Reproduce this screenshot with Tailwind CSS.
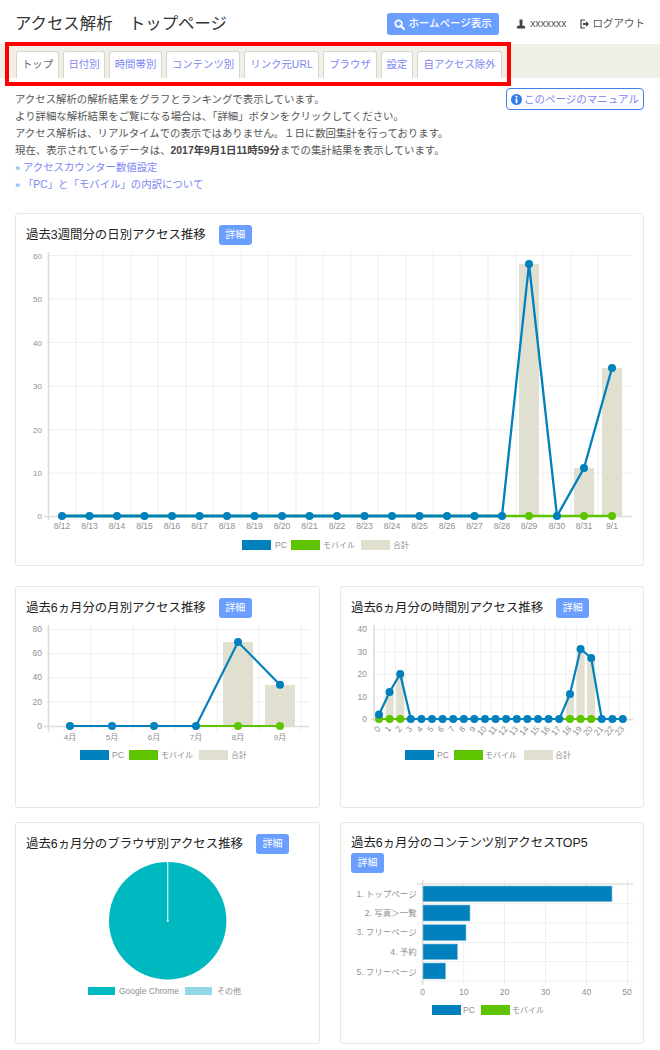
<!DOCTYPE html>
<html lang="ja">
<head>
<meta charset="utf-8">
<script src="https://cdn.jsdelivr.net/npm/@tailwindcss/browser@4"></script>
</head>
<body class="bg-white font-['Liberation_Sans','Noto_Sans_CJK_JP',sans-serif] text-[#555]">
<div class="relative w-[660px] h-[1050px] overflow-hidden">

<header class="flex items-center h-[44px] pt-[4px] pl-[15px] pr-[15px]">
  <h1 class="text-[16.4px] text-[#333] font-normal whitespace-pre mb-[2px]">アクセス解析　トップページ</h1>
  <a class="ml-auto flex items-center gap-[3px] w-[112px] justify-center h-[22px] rounded-[3px] bg-[#6a9eff] text-white text-[10.5px] font-medium">
    <svg class="w-[11px] h-[11px]" viewBox="0 0 12 12"><circle cx="5" cy="5" r="3.6" fill="none" stroke="white" stroke-width="1.9"/><path d="M7.6 7.6 11 11" stroke="white" stroke-width="2.2" stroke-linecap="round"/></svg>
    ホームページ表示
  </a>
  <span class="ml-[17px] flex items-center gap-[4px] text-[10.4px]">
    <svg class="w-[10px] h-[10px]" viewBox="0 0 9 10"><path d="M3 0.5h3v4l-0.4 1.4 3 1.6v2H0.4v-2l3-1.6L3 4.500z" fill="#444"/></svg>
    xxxxxxx
  </span>
  <span class="ml-[13px] flex items-center gap-[4px] text-[10.5px]">
    <svg class="w-[9px] h-[10px]" viewBox="0 0 9 10"><path d="M5 1H1v8h4" fill="none" stroke="#444" stroke-width="1.2"/><path d="M3 4h3V2l3 3-3 3V6H3z" fill="#444"/></svg>
    ログアウト
  </span>
</header>

<nav class="h-[34px] bg-[#f0efe8] flex items-end gap-[4px] pl-[16px] text-[10.4px] text-[#7d86f2]">
  <a class="w-[43px] h-[27px] flex items-center justify-center bg-white border border-[#d8d8c8] border-b-0 rounded-t-[3px] text-[#666]">トップ</a>
  <a class="w-[42px] h-[27px] flex items-center justify-center bg-white border border-[#d8d8c8] border-b-0 rounded-t-[3px]">日付別</a>
  <a class="w-[53px] h-[27px] flex items-center justify-center bg-white border border-[#d8d8c8] border-b-0 rounded-t-[3px]">時間帯別</a>
  <a class="w-[74px] h-[27px] flex items-center justify-center bg-white border border-[#d8d8c8] border-b-0 rounded-t-[3px]">コンテンツ別</a>
  <a class="w-[75px] h-[27px] flex items-center justify-center bg-white border border-[#d8d8c8] border-b-0 rounded-t-[3px]">リンク元URL</a>
  <a class="w-[54px] h-[27px] flex items-center justify-center bg-white border border-[#d8d8c8] border-b-0 rounded-t-[3px]">ブラウザ</a>
  <a class="w-[32px] h-[27px] flex items-center justify-center bg-white border border-[#d8d8c8] border-b-0 rounded-t-[3px]">設定</a>
  <a class="w-[85px] h-[27px] flex items-center justify-center bg-white border border-[#d8d8c8] border-b-0 rounded-t-[3px]">自アクセス除外</a>
</nav>

<section class="relative h-[135px] pl-[15px] pt-[13px] text-[10.4px] leading-[17px]">
  <a class="absolute right-[16px] top-[10px] h-[22px] w-[138px] flex items-center justify-center gap-[2px] border border-[#3d80f0] rounded-[4px] bg-white text-[#7d86f2] text-[10.5px]">
    <svg class="w-[11px] h-[11px]" viewBox="0 0 12 12"><circle cx="6" cy="6" r="6" fill="#2e7de9"/><rect x="5" y="2" width="2" height="2" fill="white"/><rect x="5" y="5" width="2" height="5" fill="white"/></svg>
    このページのマニュアル
  </a>
  <p>アクセス解析の解析結果をグラフとランキングで表示しています。</p>
  <p>より詳細な解析結果をご覧になる場合は、「詳細」ボタンをクリックしてください。</p>
  <p>アクセス解析は、リアルタイムでの表示ではありません。１日に数回集計を行っております。</p>
  <p>現在、表示されているデータは、<b class="font-bold text-[#444]">2017年9月1日11時59分</b>までの集計結果を表示しています。</p>
  <p class="text-[#7d86f2]"><span class="text-[#2e7de9] text-[9px]">»</span> アクセスカウンター数値設定</p>
  <p class="text-[#7d86f2] -mt-px"><span class="text-[#2e7de9] text-[9px]">»</span> 「PC」と「モバイル」の内訳について</p>
</section>

<main class="px-[15px] grid grid-cols-[305px_304px] gap-x-[20px]">

  <article class="col-span-2 h-[353px] mb-[20px] border border-[#e8e8dc] rounded-[3px] pt-[11px]">
    <div class="px-[10px] leading-[20px] text-[12.4px] text-[#222]">過去3週間分の日別アクセス推移<a class="inline-block align-top ml-[13px] w-[33px] h-[20px] rounded-[3px] bg-[#6a9eff] text-white text-[10px] text-center">詳細</a></div>
    <svg class="block mt-[5px]" width="627" height="310" viewBox="16 250 627 310" font-size="8" fill="#8f8f8f" font-family="Liberation Sans, Noto Sans CJK JP, sans-serif">
      <path stroke="#efefef" fill="none" d="M48 255.5H632M48 299H632M48 342.5H632M48 386H632M48 429.5H632M48 473H632M76 252V520M103 252V520M131 252V520M158 252V520M186 252V520M213 252V520M241 252V520M268 252V520M296 252V520M323 252V520M351 252V520M378 252V520M406 252V520M433 252V520M461 252V520M488 252V520M516 252V520M543 252V520M571 252V520M598 252V520"/>
      <path stroke="#dcdcdc" stroke-width="1.5" fill="none" d="M48.5 252V520M44 516.5H632"/>
      <g text-anchor="end"><text x="42" y="259">60</text><text x="42" y="302">50</text><text x="42" y="346">40</text><text x="42" y="389">30</text><text x="42" y="433">20</text><text x="42" y="476">10</text><text x="42" y="519">0</text></g>
      <g fill="#e0dfd0"><rect x="519" y="264" width="20" height="252"/><rect x="574" y="468" width="20" height="48"/><rect x="602" y="368" width="20" height="148"/></g>
      <path stroke="#5ec300" stroke-width="2.5" fill="none" d="M62 516H612"/>
      <path stroke="#5ec300" stroke-width="8" stroke-linecap="round" fill="none" d="M529 516h.01M584 516h.01M612 516h.01"/>
      <polyline stroke="#0080bd" stroke-width="2.3" fill="none" points="62,516 502,516 529,264 557,516 584,468 612,368"/>
      <path stroke="#0080bd" stroke-width="2.5" fill="none" d="M62 516H502"/>
      <path stroke="#0080bd" stroke-width="8" stroke-linecap="round" fill="none" d="M62 516h.01M89.500 516h.01M117 516h.01M144.500 516h.01M172 516h.01M199.500 516h.01M227 516h.01M254.500 516h.01M282 516h.01M309.500 516h.01M337 516h.01M364.500 516h.01M392 516h.01M419.500 516h.01M447 516h.01M474.500 516h.01M502 516h.01M529 264h.01M557 516h.01M584 468h.01M612 368h.01"/>
      <g text-anchor="middle" font-size="8.5"><text x="62" y="529">8/12</text><text x="89.500" y="529">8/13</text><text x="117" y="529">8/14</text><text x="144.500" y="529">8/15</text><text x="172" y="529">8/16</text><text x="199.500" y="529">8/17</text><text x="227" y="529">8/18</text><text x="254.500" y="529">8/19</text><text x="282" y="529">8/20</text><text x="309.500" y="529">8/21</text><text x="337" y="529">8/22</text><text x="364.500" y="529">8/23</text><text x="392" y="529">8/24</text><text x="419.500" y="529">8/25</text><text x="447" y="529">8/26</text><text x="474.500" y="529">8/27</text><text x="502" y="529">8/28</text><text x="529" y="529">8/29</text><text x="557" y="529">8/30</text><text x="584" y="529">8/31</text><text x="612" y="529">9/1</text></g>
      <rect x="242" y="540" width="29" height="10" fill="#0080bd"/><text x="275" y="548" font-size="8.5">PC</text>
      <rect x="291" y="540" width="29" height="10" fill="#5ec300"/><text x="323" y="548">モバイル</text>
      <rect x="361" y="540" width="29" height="10" fill="#e0dfd0"/><text x="393" y="548">合計</text>
    </svg>
  </article>

  <article class="h-[222px] mb-[14px] border border-[#e8e8dc] rounded-[3px] pt-[11px]">
    <div class="px-[10px] leading-[20px] text-[12.4px] text-[#222]">過去6ヵ月分の月別アクセス推移<a class="inline-block align-top ml-[13px] w-[33px] h-[20px] rounded-[3px] bg-[#6a9eff] text-white text-[10px] text-center">詳細</a></div>
    <svg class="block mt-[4px]" width="303" height="180" viewBox="16 622 303 180" font-size="8" fill="#8f8f8f" font-family="Liberation Sans, Noto Sans CJK JP, sans-serif">
      <path stroke="#efefef" fill="none" d="M46 629.500H309M46 653.500H309M46 678H309M46 702H309M91 625V732M133 625V732M175 625V732M217 625V732M259 625V732M301 625V732"/>
      <path stroke="#dcdcdc" stroke-width="1.5" fill="none" d="M48.500 625V732M44 726.500H309"/>
      <g text-anchor="end" font-size="8.5"><text x="42" y="632">80</text><text x="42" y="656">60</text><text x="42" y="680">40</text><text x="42" y="705">20</text><text x="42" y="729">0</text></g>
      <g fill="#e0dfd0"><rect x="223" y="642" width="30" height="84"/><rect x="265" y="685" width="30" height="41"/></g>
      <path stroke="#5ec300" stroke-width="2" fill="none" d="M196 726H280"/>
      <path stroke="#5ec300" stroke-width="8" stroke-linecap="round" fill="none" d="M238 726h.01M280 726h.01"/>
      <polyline stroke="#0080bd" stroke-width="2.2" fill="none" points="70,726 196,726 238,642 280,684.700"/>
      <path stroke="#0080bd" stroke-width="8" stroke-linecap="round" fill="none" d="M70 726h.01M112 726h.01M154 726h.01M196 726h.01M238 642h.01M280 684.700h.01"/>
      <g text-anchor="middle"><text x="70" y="740">4月</text><text x="112" y="740">5月</text><text x="154" y="740">6月</text><text x="196" y="740">7月</text><text x="238" y="740">8月</text><text x="280" y="740">9月</text></g>
      <rect x="80" y="750" width="29" height="10" fill="#0080bd"/><text x="112" y="758" font-size="8.5">PC</text>
      <rect x="129" y="750" width="29" height="10" fill="#5ec300"/><text x="161" y="758">モバイル</text>
      <rect x="199" y="750" width="29" height="10" fill="#e0dfd0"/><text x="231" y="758">合計</text>
    </svg>
  </article>

  <article class="h-[222px] mb-[14px] border border-[#e8e8dc] rounded-[3px] pt-[11px]">
    <div class="px-[10px] leading-[20px] text-[12.4px] text-[#222]">過去6ヵ月分の時間別アクセス推移<a class="inline-block align-top ml-[13px] w-[33px] h-[20px] rounded-[3px] bg-[#6a9eff] text-white text-[10px] text-center">詳細</a></div>
    <svg class="block mt-[4px]" width="302" height="180" viewBox="341 622 302 180" font-size="8" fill="#8f8f8f" font-family="Liberation Sans, Noto Sans CJK JP, sans-serif">
      <path stroke="#efefef" fill="none" d="M372 629.500H633M372 652H633M372 674.500H633M372 697H633M384.700 625V722M395.300 625V722M406 625V722M416.700 625V722M427.300 625V722M438 625V722M448.700 625V722M459.300 625V722M470 625V722M480.700 625V722M491.300 625V722M502 625V722M512.700 625V722M523.300 625V722M534 625V722M544.700 625V722M555.300 625V722M566 625V722M576.700 625V722M587.300 625V722M598 625V722M608.700 625V722M619.300 625V722M630 625V722"/>
      <path stroke="#dcdcdc" stroke-width="1.5" fill="none" d="M374 625V722M371 719.500H633"/>
      <g text-anchor="end" font-size="8.5"><text x="367" y="632">40</text><text x="367" y="655">30</text><text x="367" y="677">20</text><text x="367" y="700">10</text><text x="367" y="722">0</text></g>
      <g fill="#e0dfd0"><rect x="375" y="714" width="8" height="5"/><rect x="385.600" y="692" width="8" height="27"/><rect x="396.200" y="674" width="8" height="45"/><rect x="566" y="694" width="8" height="25"/><rect x="576.600" y="649" width="8" height="70"/><rect x="587.200" y="658" width="8" height="61"/></g>
      <path stroke="#5ec300" stroke-width="2" fill="none" d="M379 719H622"/>
      <path stroke="#5ec300" stroke-width="8" stroke-linecap="round" fill="none" d="M379 719h.01M389.600 719h.01M400.200 719h.01M570 719h.01M580.600 719h.01M591.200 719h.01"/>
      <polyline stroke="#0080bd" stroke-width="2.2" fill="none" points="379,714.500 389.600,692 400.200,674 410.800,719 559.400,719 570,694 580.600,649 591.200,658 601.800,719 622.800,719"/>
      <path stroke="#0080bd" stroke-width="8" stroke-linecap="round" fill="none" d="M379 714.500h.01M389.600 692h.01M400.200 674h.01M410.800 719h.01M421.400 719h.01M432 719h.01M442.600 719h.01M453.200 719h.01M463.800 719h.01M474.400 719h.01M485 719h.01M495.600 719h.01M506.200 719h.01M516.800 719h.01M527.400 719h.01M538 719h.01M548.600 719h.01M559.200 719h.01M570 694h.01M580.600 649h.01M591.200 658h.01M601.800 719h.01M612.400 719h.01M622.800 719h.01"/>
      <g text-anchor="end" font-size="8.5">
        <text transform="translate(381 729) rotate(-50)">0</text><text transform="translate(391.600 729) rotate(-50)">1</text><text transform="translate(402.200 729) rotate(-50)">2</text><text transform="translate(412.800 729) rotate(-50)">3</text><text transform="translate(423.400 729) rotate(-50)">4</text><text transform="translate(434 729) rotate(-50)">5</text><text transform="translate(444.600 729) rotate(-50)">6</text><text transform="translate(455.200 729) rotate(-50)">7</text><text transform="translate(465.800 729) rotate(-50)">8</text><text transform="translate(476.400 729) rotate(-50)">9</text><text transform="translate(487 729) rotate(-50)">10</text><text transform="translate(497.600 729) rotate(-50)">11</text><text transform="translate(508.200 729) rotate(-50)">12</text><text transform="translate(518.800 729) rotate(-50)">13</text><text transform="translate(529.400 729) rotate(-50)">14</text><text transform="translate(540 729) rotate(-50)">15</text><text transform="translate(550.600 729) rotate(-50)">16</text><text transform="translate(561.200 729) rotate(-50)">17</text><text transform="translate(572 729) rotate(-50)">18</text><text transform="translate(582.600 729) rotate(-50)">19</text><text transform="translate(593.200 729) rotate(-50)">20</text><text transform="translate(603.800 729) rotate(-50)">21</text><text transform="translate(614.400 729) rotate(-50)">22</text><text transform="translate(624.800 729) rotate(-50)">23</text>
      </g>
      <rect x="405" y="750" width="29" height="10" fill="#0080bd"/><text x="437" y="758" font-size="8.5">PC</text>
      <rect x="454" y="750" width="29" height="10" fill="#5ec300"/><text x="485" y="758">モバイル</text>
      <rect x="524" y="750" width="29" height="10" fill="#e0dfd0"/><text x="555" y="758">合計</text>
    </svg>
  </article>

  <article class="h-[222px] border border-[#e8e8dc] rounded-[3px] pt-[11px]">
    <div class="px-[10px] leading-[20px] text-[12.4px] text-[#222]">過去6ヵ月分のブラウザ別アクセス推移<a class="inline-block align-top ml-[13px] w-[33px] h-[20px] rounded-[3px] bg-[#6a9eff] text-white text-[10px] text-center">詳細</a></div>
    <svg class="block mt-[4px]" width="303" height="180" viewBox="16 858 303 180" font-size="8" fill="#8f8f8f" font-family="Liberation Sans, Noto Sans CJK JP, sans-serif">
      <circle cx="167.700" cy="920.700" r="58.700" fill="#00b8bf"/>
      <path stroke="#e4f6f6" stroke-width="1.200" d="M167.700 862V921"/>
      <circle cx="167.700" cy="920.700" r="1" fill="#e4f6f6"/>
      <rect x="88" y="987" width="27" height="8" fill="#00b8bf"/><text x="119" y="994" font-size="8.5">Google Chrome</text>
      <rect x="185" y="987" width="27" height="8" fill="#92d8e8"/><text x="217" y="994">その他</text>
    </svg>
  </article>

  <article class="h-[222px] border border-[#e8e8dc] rounded-[3px] pt-[10px]">
    <div class="px-[10px] leading-[20px] text-[12.4px] text-[#222]">過去6ヵ月分のコンテンツ別アクセスTOP5<a class="block w-[33px] h-[20px] rounded-[3px] bg-[#6a9eff] text-white text-[10px] text-center">詳細</a></div>
    <svg class="block mt-[4px]" width="302" height="164" viewBox="341 877 302 164" font-size="8.5" fill="#8f8f8f" font-family="Liberation Sans, Noto Sans CJK JP, sans-serif">
      <path stroke="#efefef" fill="none" d="M417 903.700H633M417 923H633M417 942.700H633M417 961.700H633M417 981H633M463.700 880V985M504.500 880V985M545.500 880V985M586.500 880V985M627.500 880V985"/>
      <path stroke="#d8d4d0" stroke-width="1.200" fill="none" d="M417 884H633M422.700 880V985"/>
      <g text-anchor="end"><text x="416.700" y="897">1. トップページ</text><text x="416.700" y="916">2. 写真＞一覧</text><text x="416.700" y="935">3. フリーページ</text><text x="416.700" y="955">4. 予約</text><text x="416.700" y="975">5. フリーページ</text></g>
      <g fill="#0080bd" stroke="#8cc6e2" stroke-width="0.600"><rect x="423" y="886" width="189" height="15.700"/><rect x="423" y="905" width="47" height="16"/><rect x="423" y="924.700" width="43" height="16"/><rect x="423" y="944" width="34.500" height="15.700"/><rect x="423" y="963" width="22.700" height="16"/></g>
      <g text-anchor="middle"><text x="422.700" y="995">0</text><text x="463.700" y="995">10</text><text x="504.500" y="995">20</text><text x="545.500" y="995">30</text><text x="586.500" y="995">40</text><text x="627" y="995">50</text></g>
      <rect x="432" y="1005" width="29" height="10" fill="#0080bd"/><text x="463" y="1013">PC</text>
      <rect x="481" y="1005" width="29" height="10" fill="#5ec300"/><text x="512" y="1013" font-size="8">モバイル</text>
    </svg>
  </article>
</main>

<div class="absolute left-[5px] top-[42px] w-[506px] h-[44px] border-[4px] border-[#ff0000] pointer-events-none"></div>
</div>
</body>
</html>
